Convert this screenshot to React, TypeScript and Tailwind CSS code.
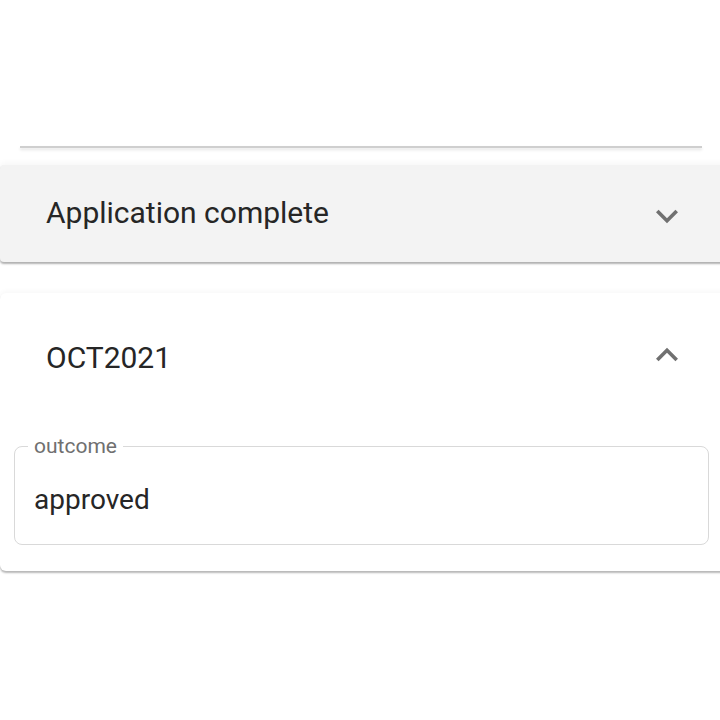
import React from "react";

function ChevronIcon({ up }: { up?: boolean }) {
    return (
        <svg viewBox="0 0 24 24" className="w-[44px] h-[44px] fill-[#707070]">
            {up ? (
                <path d="M12 8l-6 6 1.41 1.41L12 10.83l4.59 4.58L18 14z" />
            ) : (
                <path d="M16.59 8.59 12 13.17 7.41 8.59 6 10l6 6 6-6z" />
            )}
        </svg>
    );
}

export default function App() {
    return (
        <div
            className="w-[720px] h-[720px] overflow-hidden bg-white relative"
            style={{ fontFamily: "Roboto, 'Liberation Sans', sans-serif" }}
        >
            <div className="pt-[146px]">
                {/* edge of the card above */}
                <div className="mx-[20px] mr-[18px] h-[2px] bg-[#cfcfcf] shadow-[0_2px_3px_rgba(0,0,0,0.12)]"></div>

                {/* collapsed panel */}
                <div className="mt-[17px] w-[730px] h-[97px] bg-[#f3f3f3] rounded-l-[4px] shadow-[0_-2px_6px_rgba(0,0,0,0.04),0_2px_2px_rgba(0,0,0,0.3)] flex items-center justify-between pl-[46px] pr-[41px]">
                    <span className="text-[30px] text-[#262626] leading-none -mt-[2px]">Application complete</span>
                    <div className="mt-[4px]">
                        <ChevronIcon />
                    </div>
                </div>

                {/* expanded panel */}
                <div className="mt-[31px] w-[730px] bg-white rounded-l-[6px] shadow-[0_-2px_5px_rgba(0,0,0,0.03),0_2px_2px_rgba(0,0,0,0.28)] pb-[26px]">
                    <div className="h-[128px] flex items-center justify-between pl-[46px] pr-[41px]">
                        <span className="text-[30px] text-[#262626] leading-none mt-[2px]">OCT2021</span>
                        <div className="-mt-[4px]">
                            <ChevronIcon up />
                        </div>
                    </div>
                    <div className="pl-[14px] pr-[21px] pt-[25px]">
                        <div className="relative h-[99px] border border-[#d9d9d9] rounded-[8px] flex items-center pl-[19px]">
                            <span className="absolute -top-[13px] left-[13px] px-[6px] bg-white text-[21px] leading-[24px] text-[#707070]">
                                outcome
                            </span>
                            <span className="text-[28px] text-[#262626] leading-none mt-[8px]">approved</span>
                        </div>
                    </div>
                </div>
            </div>
        </div>
    );
}
